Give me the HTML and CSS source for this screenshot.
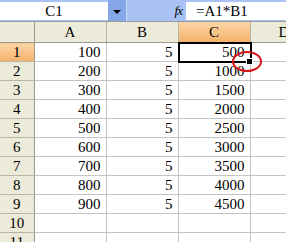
FILE: index.html
```html
<!DOCTYPE html>
<html lang="zh">
  <head>
    <meta charset="UTF-8" />
    <title>Sheet</title>
    <link rel="stylesheet" href="styles.css">
  </head>
  <body>
    <div class="formula-bar">
      <div class="name-box">C1</div>
      <div class="name-drop"><span class="tri"></span></div>
      <div class="fx-area"><span class="fx">fx</span></div>
      <div class="formula">=A1*B1</div>
    </div>
    <table class="sheet">
      <colgroup>
        <col class="col-head">
        <col class="col-cell">
        <col class="col-cell">
        <col class="col-cell">
        <col>
      </colgroup>
      <tr class="head-row">
        <th class="corner"></th>
        <th>A</th>
        <th>B</th>
        <th class="sel">C</th>
        <th class="cut">D</th>
      </tr>
      <tr><th class="sel">1</th><td>100</td><td>5</td><td class="active">500<span class="handle"></span><span class="ring"></span></td><td></td></tr>
      <tr><th>2</th><td>200</td><td>5</td><td>1000</td><td></td></tr>
      <tr><th>3</th><td>300</td><td>5</td><td>1500</td><td></td></tr>
      <tr><th>4</th><td>400</td><td>5</td><td>2000</td><td></td></tr>
      <tr><th>5</th><td>500</td><td>5</td><td>2500</td><td></td></tr>
      <tr><th>6</th><td>600</td><td>5</td><td>3000</td><td></td></tr>
      <tr><th>7</th><td>700</td><td>5</td><td>3500</td><td></td></tr>
      <tr><th>8</th><td>800</td><td>5</td><td>4000</td><td></td></tr>
      <tr><th>9</th><td>900</td><td>5</td><td>4500</td><td></td></tr>
      <tr><th>10</th><td></td><td></td><td></td><td></td></tr>
      <tr><th>11</th><td></td><td></td><td></td><td></td></tr>
    </table>
  </body>
</html>
```

FILE: styles.css
```css
body {
  margin: 0;
  padding: 0;
  width: 286px;
  height: 242px;
  overflow: hidden;
  background: #fff;
  font-family: "Liberation Serif", "Noto Sans CJK SC", serif;
  font-size: 15px;
  color: #000;
}
.formula-bar {
  display: flex;
  height: 22px;
  padding-top: 2px;
  box-sizing: border-box;
  background: #a8c3f3;
  border-bottom: 1px solid #9a9a9a;
}
.name-box {
  width: 108px;
  height: 18px;
  line-height: 18px;
  background: #fff;
  text-align: center;
}
.name-drop {
  width: 18px;
  height: 21px;
  margin-top: -2px;
  background: #86a6ea;
  border-right: 1px solid #c8d8f8;
  display: flex;
  align-items: center;
  justify-content: center;
}
.tri {
  width: 0;
  height: 0;
  border-left: 4px solid transparent;
  border-right: 4px solid transparent;
  border-top: 4px solid #000;
  margin-top: 2px;
}
.fx-area {
  width: 59px;
  display: flex;
  justify-content: flex-end;
  padding-right: 4px;
  box-sizing: border-box;
}
.fx {
  font-style: italic;
  font-size: 13px;
  line-height: 18px;
  letter-spacing: -1px;
}
.formula {
  flex: 1;
  height: 18px;
  line-height: 18px;
  background: #fff;
  padding-left: 10px;
}
.sheet {
  border-collapse: collapse;
  table-layout: fixed;
  width: 300px;
}
.col-head {
  width: 34px;
}
.col-cell {
  width: 72px;
}
.sheet th,
.sheet td {
  height: 18px;
  padding: 0;
  line-height: 18px;
  border: 1px solid #c4c4c4;
  white-space: nowrap;
  overflow: hidden;
}
.sheet th {
  font-weight: normal;
  text-align: center;
  background: #ecead9;
  border-color: #b8b6a6;
}
.head-row th {
  height: 20px;
  border-top: none;
  border-bottom-color: #9c9a8c;
}
.sheet tr th:first-child {
  border-left: none;
  border-right-color: #9c9a8c;
}
.sheet th.sel {
  background: linear-gradient(#fbd6a6, #f5b16c);
}
.sheet th.cut {
  text-align: left;
  padding-left: 28px;
}
.sheet td {
  text-align: right;
  padding-right: 5px;
  background: #fff;
}
.sheet td.active {
  position: relative;
  overflow: visible;
}
.active::before {
  content: "";
  position: absolute;
  left: -1px;
  top: -1px;
  right: -2px;
  bottom: -2px;
  border: 2px solid #000;
}
.handle {
  position: absolute;
  right: -3px;
  bottom: -4px;
  width: 5px;
  height: 5px;
  background: #000;
  border: 1px solid #fff;
  z-index: 2;
}
.ring {
  position: absolute;
  right: -12px;
  bottom: -11px;
  width: 26px;
  height: 17px;
  border: 2px solid #d81818;
  border-radius: 50%;
  z-index: 3;
}
```
